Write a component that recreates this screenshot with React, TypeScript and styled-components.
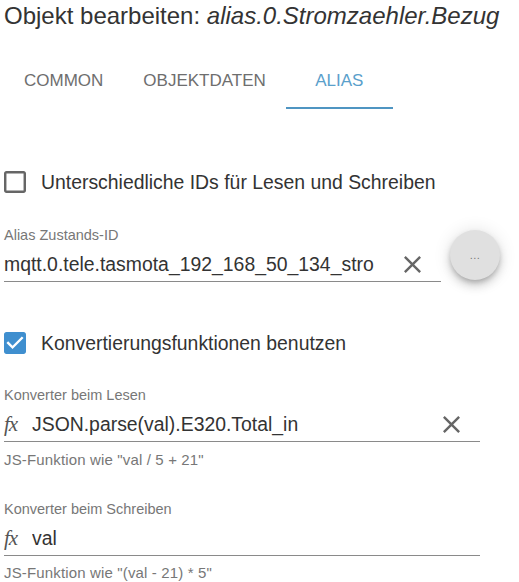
import React from "react";
import styled, { createGlobalStyle } from "styled-components";

const Global = createGlobalStyle`
  html, body { margin: 0; padding: 0; background: #ffffff; }
  body { font-family: "Liberation Sans", Arial, sans-serif; }
`;

const Page = styled.div`
  width: 519px;
  height: 582px;
  overflow: hidden;
  padding-left: 4px;
  box-sizing: border-box;
  color: #333333;
`;

const Title = styled.h1`
  margin: 2px 0 0 0;
  font-size: 24px;
  line-height: 28px;
  font-weight: 400;
  color: #333333;
  white-space: nowrap;
  em { font-style: italic; }
`;

const TabBar = styled.div`
  display: flex;
  margin-top: 29px;
  margin-left: -4px;
  padding-left: 4px;
  height: 50px;
`;

const Tab = styled.div<{ $active?: boolean; $min?: number }>`
  position: relative;
  box-sizing: border-box;
  min-width: ${(p) => p.$min ?? 0}px;
  padding: 12px 20px 0 20px;
  font-size: 17px;
  line-height: 20px;
  text-align: center;
  color: ${(p) => (p.$active ? "#5aa0cb" : "#6e6e6e")};
  &::after {
    content: "";
    display: ${(p) => (p.$active ? "block" : "none")};
    position: absolute;
    left: 0;
    right: 0;
    bottom: 0;
    height: 2px;
    background: #4f95c2;
  }
`;

const CheckRow = styled.div<{ $mt: number }>`
  display: flex;
  align-items: center;
  gap: 15px;
  margin-top: ${(p) => p.$mt}px;
  height: 22px;
  font-size: 19.4px;
  color: #333333;
`;

const Field = styled.div<{ $mt: number }>`
  display: flex;
  flex-direction: column;
  margin-top: ${(p) => p.$mt}px;
`;

const Label = styled.div`
  font-size: 14.5px;
  line-height: 16px;
  color: #777777;
`;

const Helper = styled.div<{ $mt?: number }>`
  margin-top: ${(p) => p.$mt ?? 10}px;
  font-size: 15px;
  line-height: 16px;
  letter-spacing: 0.15px;
  color: #777777;
`;

const FieldLine = styled.div<{ $mt: number }>`
  display: flex;
  align-items: flex-end;
  margin-top: ${(p) => p.$mt}px;
`;

const InputBox = styled.div<{ $w: number }>`
  display: flex;
  align-items: center;
  width: ${(p) => p.$w}px;
  height: 29px;
  margin-top: 9px;
  border-bottom: 1px solid #8a8a8a;
  box-sizing: content-box;
`;

const InputText = styled.div`
  flex: 1;
  min-width: 0;
  overflow: hidden;
  white-space: nowrap;
  font-size: 19.4px;
  line-height: 24px;
  color: #333333;
  padding-bottom: 5px;
`;

const Fx = styled.span`
  font-family: "Liberation Serif", "Times New Roman", serif;
  font-style: italic;
  font-size: 21px;
  line-height: 24px;
  color: #555555;
  width: 28px;
  flex: none;
  padding-bottom: 5px;
  letter-spacing: -1px;
`;

const ClearButton = styled.div<{ $ml: number; $mr: number }>`
  flex: none;
  display: flex;
  margin-left: ${(p) => p.$ml}px;
  margin-right: ${(p) => p.$mr}px;
  padding-bottom: 5px;
`;

const RoundButton = styled.div`
  flex: none;
  width: 50px;
  height: 50px;
  border-radius: 50%;
  margin-left: 9px;
  margin-bottom: 2px;
  background: #e0e0e0;
  box-shadow: 0 3px 5px -1px rgba(0, 0, 0, 0.2), 0 6px 10px 0 rgba(0, 0, 0, 0.14),
    0 1px 18px 0 rgba(0, 0, 0, 0.12);
  display: flex;
  align-items: center;
  justify-content: center;
  font-size: 11px;
  color: #777777;
  letter-spacing: 0.5px;
`;

const CloseIcon = () => (
  <svg width="17" height="17" viewBox="5 5 14 14" fill="#666666">
    <path d="M19 6.41L17.59 5 12 10.59 6.41 5 5 6.41 10.59 12 5 17.59 6.41 19 12 13.41 17.59 19 19 17.59 13.41 12z" />
  </svg>
);

const CheckIcon = ({ checked }: { checked?: boolean }) =>
  checked ? (
    <svg width="22" height="22" viewBox="3 3 18 18" fill="#3f8fcf">
      <path d="M19 3H5c-1.11 0-2 .9-2 2v14c0 1.1.89 2 2 2h14c1.11 0 2-.9 2-2V5c0-1.1-.89-2-2-2zm-9 14l-5-5 1.41-1.41L10 14.17l7.59-7.59L19 8l-9 9z" />
    </svg>
  ) : (
    <svg width="22" height="22" viewBox="3 3 18 18" fill="#666666">
      <path d="M19 5v14H5V5h14m0-2H5c-1.1 0-2 .9-2 2v14c0 1.1.9 2 2 2h14c1.1 0 2-.9 2-2V5c0-1.1-.9-2-2-2z" />
    </svg>
  );

export default function App() {
  return (
    <>
      <Global />
      <Page>
        <Title>
          Objekt bearbeiten: <em>alias.0.Stromzaehler.Bezug</em>
        </Title>
        <TabBar>
          <Tab>COMMON</Tab>
          <Tab>OBJEKTDATEN</Tab>
          <Tab $active $min={107}>ALIAS</Tab>
        </TabBar>

        <CheckRow $mt={62}>
          <CheckIcon />
          <span>Unterschiedliche IDs für Lesen und Schreiben</span>
        </CheckRow>

        <FieldLine $mt={34}>
          <Field $mt={0}>
            <Label>Alias Zustands-ID</Label>
            <InputBox $w={437}>
              <InputText>mqtt.0.tele.tasmota_192_168_50_134_stromzaehler.SENSOR</InputText>
              <ClearButton $ml={30} $mr={20}>
                <CloseIcon />
              </ClearButton>
            </InputBox>
          </Field>
          <RoundButton>...</RoundButton>
        </FieldLine>

        <CheckRow $mt={50}>
          <CheckIcon checked />
          <span>Konvertierungsfunktionen benutzen</span>
        </CheckRow>

        <Field $mt={33}>
          <Label>Konverter beim Lesen</Label>
          <InputBox $w={476}>
            <Fx>fx</Fx>
            <InputText>JSON.parse(val).E320.Total_in</InputText>
            <ClearButton $ml={12} $mr={20}>
              <CloseIcon />
            </ClearButton>
          </InputBox>
          <Helper>JS-Funktion wie "val / 5 + 21"</Helper>
        </Field>

        <Field $mt={33}>
          <Label>Konverter beim Schreiben</Label>
          <InputBox $w={476}>
            <Fx>fx</Fx>
            <InputText>val</InputText>
          </InputBox>
          <Helper $mt={9}>JS-Funktion wie "(val - 21) * 5"</Helper>
        </Field>
      </Page>
    </>
  );
}
